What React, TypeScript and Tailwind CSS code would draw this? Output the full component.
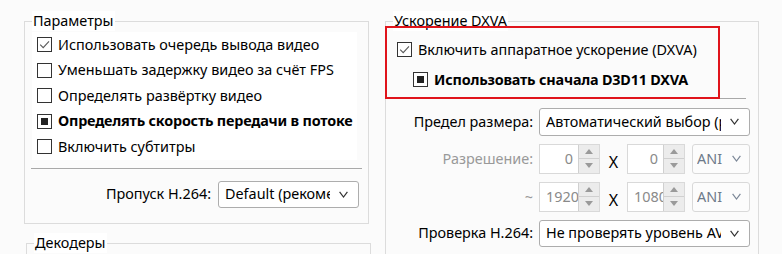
import React from 'react';

type CheckState = 'on' | 'off' | 'mixed';

const Check = ({ state }: { state: CheckState }) => (
	<span className="w-[15px] h-[15px] shrink-0 border border-[#333] bg-white flex items-center justify-center">
		{state === 'on' && (
			<svg width="13" height="13" viewBox="0 0 13 13">
				<path d="M2.2 6.6 L5.2 9.6 L11 3.4" fill="none" stroke="#5a5a5a" strokeWidth="1.1" />
			</svg>
		)}
		{state === 'mixed' && <span className="w-[7px] h-[7px] bg-[#222]" />}
	</span>
);

const CheckRow = ({ state, label, bold }: { state: CheckState; label: string; bold?: boolean }) => (
	<div className="h-[25.5px] flex items-center gap-[6px] whitespace-nowrap">
		<Check state={state} />
		<span className={bold ? 'font-bold tracking-[-0.2px]' : ''}>{label}</span>
	</div>
);

const Chevron = ({ color = '#333' }: { color?: string }) => (
	<svg width="9" height="7" viewBox="0 0 9 7" className="shrink-0">
		<path d="M0.6 0.8 L4.5 6 L8.4 0.8" fill="none" stroke={color} strokeWidth="1.2" />
	</svg>
);

const Combo = ({
	value,
	width,
	height = 'h-[27px]',
	disabled,
	small,
}: {
	value: string;
	width: string;
	height?: string;
	disabled?: boolean;
	small?: boolean;
}) => (
	<div
		className={`${width} ${height} shrink-0 rounded-[3px] border flex items-center ${
			small ? 'pl-[4px] pr-[8px] gap-[8px]' : 'pl-[6px] pr-[10px] gap-[9px]'
		} ${disabled ? 'border-[#d9d9d9] bg-[#fcfcfc] text-[#6e7a8a]' : 'border-[#adadad] bg-white text-black'}`}
	>
		<span className="flex-1 overflow-hidden whitespace-nowrap">{value}</span>
		<Chevron color={disabled ? '#7b8797' : '#333'} />
	</div>
);

const Spin = ({ value, width }: { value: string; width: string }) => (
	<div className={`${width} h-[30px] shrink-0 border border-[#d9d9d9] bg-white flex`}>
		<span className="flex-1 overflow-hidden whitespace-nowrap text-right pr-[5px] pl-[6px] leading-[28px] text-[#8a8a8a]">
			{value}
		</span>
		<div className="w-[21px] flex flex-col border-l border-[#d0d0d0] bg-[#ececec]">
			<div className="flex-1 flex items-center justify-center border-b border-[#d0d0d0]">
				<svg width="8" height="5" viewBox="0 0 8 5">
					<path d="M0 5 L4 0 L8 5 Z" fill="#9a9a9a" />
				</svg>
			</div>
			<div className="flex-1 flex items-center justify-center">
				<svg width="8" height="5" viewBox="0 0 8 5">
					<path d="M0 0 L4 5 L8 0 Z" fill="#9a9a9a" />
				</svg>
			</div>
		</div>
	</div>
);

const FormRow = ({
	label,
	muted,
	children,
	className = '',
}: {
	label: string;
	muted?: boolean;
	children: React.ReactNode;
	className?: string;
}) => (
	<div className={`flex items-center ${className}`}>
		<span className={`w-[140px] mr-[6px] shrink-0 text-right whitespace-nowrap ${muted ? 'text-[#999]' : ''}`}>{label}</span>
		{children}
	</div>
);

const SizeRow = ({ label, w, h }: { label: string; w: string; h: string }) => (
	<FormRow label={label} muted className="mt-[8px]">
		<Spin value={w} width="w-[61px]" />
		<span className="w-[27px] text-center text-[16px] pt-[6px]">X</span>
		<Spin value={h} width="w-[58px]" />
		<span className="w-[7px]" />
		<Combo value="ANI" width="w-[58px]" height="h-[30px]" disabled small />
	</FormRow>
);

export default function App() {
	return (
		<div className="w-[782px] h-[254px] overflow-hidden bg-[#fbfbfb] flex font-['Noto_Sans',sans-serif] text-[14.4px] leading-[20px] text-black">
			<div className="w-[385px] shrink-0 pl-[24px] pt-[11px] flex flex-col">
				<fieldset className="shrink-0 w-[345px] h-[213px] border border-[#dcdcdc] pl-[7px] pr-[6px]">
					<legend className="px-[1px] bg-white">Параметры</legend>
					<div className="pl-[5px] mt-[1px] bg-white w-[325px]">
						<CheckRow state="on" label="Использовать очередь вывода видео" />
						<CheckRow state="off" label="Уменьшать задержку видео за счёт FPS" />
						<CheckRow state="off" label="Определять развёртку видео" />
						<CheckRow state="mixed" label="Определять скорость передачи в потоке" bold />
						<CheckRow state="off" label="Включить субтитры" />
					</div>
					<div className="mt-[8px] border-t border-[#a8a8a8] w-[331px] -ml-[1px]" />
					<div className="mt-[12px] flex items-center justify-end gap-[7px] pr-[3px]">
						<span className="whitespace-nowrap">Пропуск H.264:</span>
						<Combo value="Default (рекоме" width="w-[141px]" />
					</div>
				</fieldset>
				<fieldset className="shrink-0 mt-[9px] ml-[2px] w-[345px] h-[60px] border border-[#dcdcdc] pl-[7px]">
					<legend className="px-[1px] bg-white">Декодеры</legend>
				</fieldset>
			</div>

			<div className="relative flex-1 pt-[11px]">
				<fieldset className="w-[374px] h-[300px] border border-[#dcdcdc] pl-[7px] pr-[6px]">
					<legend className="px-[1px] bg-white">Ускорение DXVA</legend>
					<div className="mt-[6px] pl-[4px]">
						<CheckRow state="on" label="Включить аппаратное ускорение (DXVA)" />
						<div className="pl-[16px] mt-[4.5px]">
							<CheckRow state="mixed" label="Использовать сначала D3D11 DXVA" bold />
						</div>
					</div>
					<div className="mt-[5px] border-t border-[#a8a8a8] w-[360px] -ml-[7px]" />
					<FormRow label="Предел размера:" className="mt-[9px]">
						<Combo value="Автоматический выбор (р" width="w-[211px]" height="h-[28px]" />
					</FormRow>
					<div className="mt-[1px]">
						<SizeRow label="Разрешение:" w="0" h="0" />
					</div>
					<SizeRow label="~" w="1920" h="1080" />
					<FormRow label="Проверка H.264:" className="mt-[8px]">
						<Combo value="Не проверять уровень AVC" width="w-[211px]" />
					</FormRow>
				</fieldset>
				{/* red annotation frame */}
				<div className="absolute left-0 top-[26px] w-[335px] h-[73px] border-2 border-[#e0141b] pointer-events-none" />
			</div>
		</div>
	);
}
